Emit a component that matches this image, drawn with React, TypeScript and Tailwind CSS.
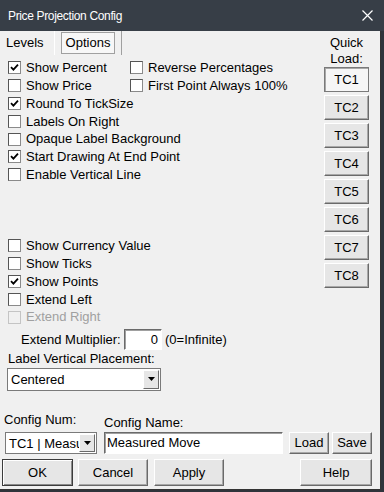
import { ReactNode } from 'react';

type Row = { label: string; checked?: boolean; disabled?: boolean; second?: { label: string; checked?: boolean } } | null;

const rows: Row[] = [
  { label: 'Show Percent', checked: true, second: { label: 'Reverse Percentages' } },
  { label: 'Show Price', second: { label: 'First Point Always 100%' } },
  { label: 'Round To TickSize', checked: true },
  { label: 'Labels On Right' },
  { label: 'Opaque Label Background' },
  { label: 'Start Drawing At End Point', checked: true },
  { label: 'Enable Vertical Line' },
  null,
  null,
  null,
  { label: 'Show Currency Value' },
  { label: 'Show Ticks' },
  { label: 'Show Points', checked: true },
  { label: 'Extend Left' },
  { label: 'Extend Right', disabled: true },
];

const quickLoad = ['TC1', 'TC2', 'TC3', 'TC4', 'TC5', 'TC6', 'TC7', 'TC8'];

function CheckBox({ checked, disabled }: { checked?: boolean; disabled?: boolean }) {
  return (
    <span
      className={`flex h-[13px] w-[13px] shrink-0 items-center justify-center border ${
        disabled
          ? 'border-[#c4c4c4] bg-[#f0f0f0]'
          : 'border-t-[#555] border-l-[#555] border-r-[#8a8a8a] border-b-[#8a8a8a] bg-white'
      }`}
    >
      {checked && (
        <svg width="9" height="9" viewBox="0 0 9 9">
          <path d="M1 4.2 L3.4 6.6 L8 1.6" stroke="#000" strokeWidth="1.8" fill="none" />
        </svg>
      )}
    </span>
  );
}

function Check({ label, checked, disabled }: { label: string; checked?: boolean; disabled?: boolean }) {
  return (
    <div className="flex items-center gap-[5px] whitespace-nowrap">
      <CheckBox checked={checked} disabled={disabled} />
      <span className={disabled ? 'text-[#a0a0a0]' : 'text-black'}>{label}</span>
    </div>
  );
}

function Button({ children, className = '', focused, isDefault }: { children: ReactNode; className?: string; focused?: boolean; isDefault?: boolean }) {
  const base = focused
    ? 'border border-[#7a7a7a] bg-[#f6f6f6] shadow-[inset_1px_1px_0_#a8a8a8]'
    : isDefault
      ? 'border border-[#3c3c3c] bg-[#e6e6e6] shadow-[inset_1px_1px_0_#ffffff,inset_-1px_-1px_0_#8a8a8a]'
      : 'border border-t-white border-l-white border-r-[#6a6a6a] border-b-[#6a6a6a] bg-[#e6e6e6] shadow-[inset_-1px_-1px_0_#a8a8a8]';
  return (
    <button type="button" className={`flex items-center justify-center text-black ${base} ${className}`}>
      {children}
    </button>
  );
}

function Dropdown({ value, className = '' }: { value: string; className?: string }) {
  return (
    <div className={`flex items-stretch overflow-hidden border border-[#7a7a7a] bg-white p-[1px] ${className}`}>
      <span className="min-w-0 flex-1 overflow-hidden whitespace-nowrap pl-[2px] leading-[19px]">{value}</span>
      <span className="flex w-[16px] shrink-0 items-center justify-center border border-t-white border-l-white border-r-[#6a6a6a] border-b-[#6a6a6a] bg-[#e6e6e6]">
        <svg width="7" height="4" viewBox="0 0 7 4">
          <path d="M0 0 H7 L3.5 4 Z" fill="#000" />
        </svg>
      </span>
    </div>
  );
}

export default function App() {
  return (
    <div
      className="h-[492px] w-[384px] overflow-hidden bg-[#2f343b] text-[13px] text-black"
      style={{ fontFamily: '"Liberation Sans", Arial, sans-serif' }}
    >
      <div className="flex h-[31px] w-[384px] items-center justify-between bg-[#373e47] pl-[8px] pr-[11px]">
        <span className="text-[12px] tracking-[-0.35px] text-white">Price Projection Config</span>
        <svg width="11" height="11" viewBox="0 0 11 11">
          <path d="M0.5 0.5 L10.5 10.5 M10.5 0.5 L0.5 10.5" stroke="#fff" strokeWidth="1.2" />
        </svg>
      </div>

      <div className="flex h-[459px] w-[381px] flex-col border-r border-b border-[#333] bg-[#f0f0f0]">
        <div className="flex">
          <div className="w-[324px]">
            <div className="flex h-[28px] items-start">
              <span className="pl-[6px] pt-[3px] leading-[17px]">Levels</span>
              <div className="ml-[10px] flex h-[24px] border-l border-r border-l-white border-r-[#a0a0a0] px-[6px] pt-[1px]">
                <span className="flex h-[22px] items-center border border-[#a0a0a0] bg-[#f7f7f7] px-[4px]">Options</span>
              </div>
            </div>

            <div className="pl-[8px]">
              {rows.map((row, i) => (
                <div key={i} className="flex h-[17.8px] items-center">
                  {row && (
                    <>
                      <div className="min-w-[122px]">
                        <Check label={row.label} checked={row.checked} disabled={row.disabled} />
                      </div>
                      {row.second && <Check label={row.second.label} checked={row.second.checked} />}
                    </>
                  )}
                </div>
              ))}
            </div>

            <div className="mt-[3px] flex h-[21px] items-center">
              <span className="w-[124px] pl-[21px]">Extend Multiplier:</span>
              <span className="flex h-[21px] w-[38px] items-center justify-end border border-t-[#6a6a6a] border-l-[#6a6a6a] border-r-white border-b-white bg-white pr-[3px] shadow-[inset_1px_1px_0_#a0a0a0]">
                0
              </span>
              <span className="pl-[3px]">(0=Infinite)</span>
            </div>

            <div className="flex h-[18px] items-center pl-[8px]">Label Vertical Placement:</div>
            <Dropdown value="Centered" className="ml-[7px] h-[23px] w-[154px]" />
          </div>

          <div className="flex w-[45px] flex-col items-center pt-[4px]">
            <span className="leading-[16px]">Quick</span>
            <span className="leading-[16px]">Load:</span>
            <div className="flex w-[45px] flex-col gap-[3px]">
              {quickLoad.map((name, i) => (
                <Button key={name} focused={i === 0} className="h-[25px] w-[45px]">
                  {name}
                </Button>
              ))}
            </div>
          </div>
        </div>

        <div className="mt-auto pb-[3px]">
          <div className="flex h-[32px] items-end pb-[1px]">
            <span className="mb-[3px] w-[104px] pl-[4px] leading-[16px]">Config Num:</span>
            <span className="leading-[16px]">Config Name:</span>
          </div>
          <div className="flex h-[22px] items-center">
            <Dropdown value="TC1 | Measured Move" className="ml-[5px] h-[22px] w-[92px]" />
            <span className="ml-[7px] flex h-[22px] w-[179px] items-center border border-t-[#6a6a6a] border-l-[#6a6a6a] border-r-white border-b-white bg-white pl-[2px] shadow-[inset_1px_1px_0_#a0a0a0]">
              Measured Move
            </span>
            <Button className="ml-[6px] h-[22px] w-[40px]">Load</Button>
            <Button className="ml-[3px] h-[22px] w-[40px]">Save</Button>
          </div>
          <div className="mt-[5px] flex h-[27px] items-center">
            <Button isDefault className="ml-[2px] h-[27px] w-[71px]">OK</Button>
            <Button className="ml-[5px] h-[27px] w-[70px]">Cancel</Button>
            <Button className="ml-[6px] h-[27px] w-[70px]">Apply</Button>
            <Button className="ml-[76px] h-[27px] w-[72px]">Help</Button>
          </div>
        </div>
      </div>
    </div>
  );
}
